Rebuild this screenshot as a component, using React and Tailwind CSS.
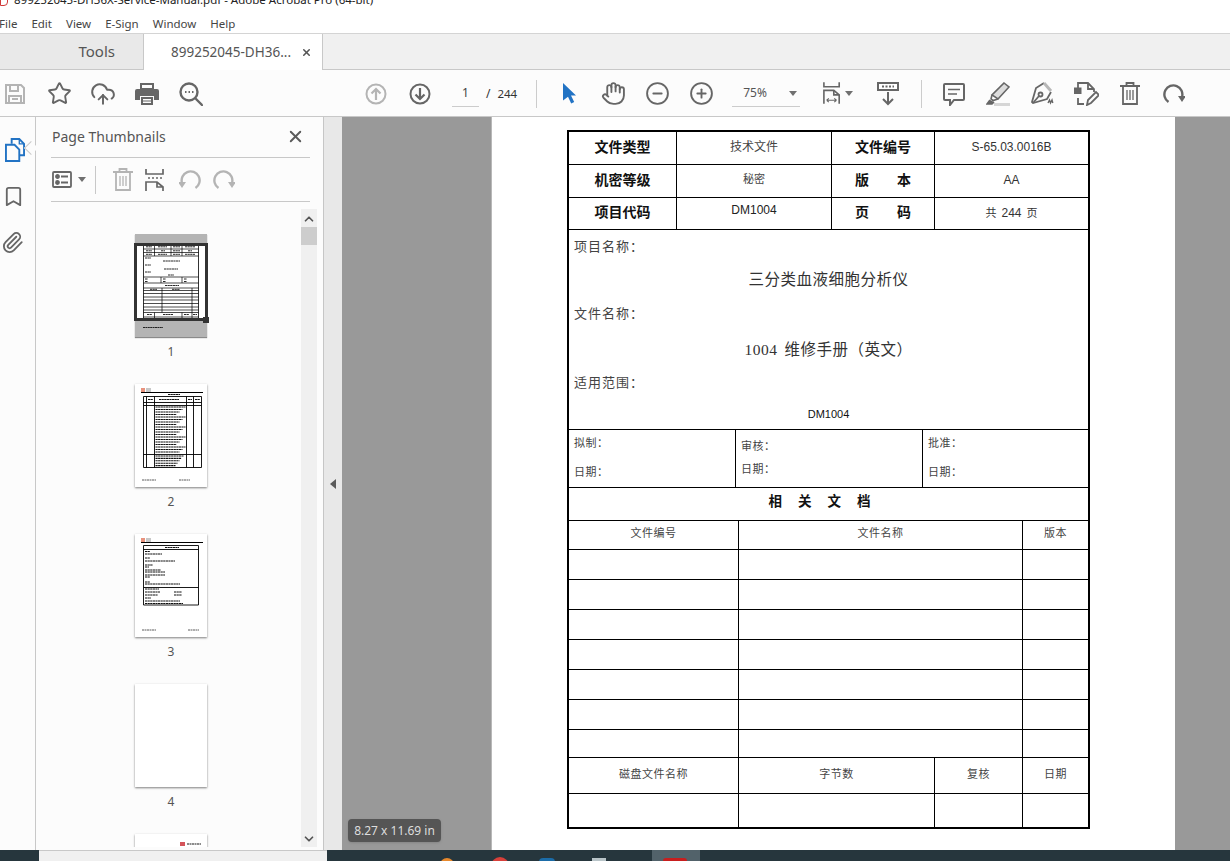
import { Star, CloudUpload, Hand, CircleMinus, CirclePlus, X, ChevronUp, ChevronDown, Bookmark, Paperclip } from "lucide-react";

const UI_FONT = { fontFamily: '"Noto Sans", "Open Sans", sans-serif' };

const ICON = "#666666";
const OFF = "#b4b4b4";

function Slot({ children, className = "" }) {
  return <div className={`w-[44px] h-[44px] flex items-center justify-center shrink-0 ${className}`}>{children}</div>;
}

function Caret({ color = "#707070" }) {
  return (
    <svg width="8" height="5" viewBox="0 0 8 5">
      <path d="M0 0h8L4 5z" fill={color} />
    </svg>
  );
}

function SaveIcon() {
  return (
    <svg width="22" height="22" viewBox="0 0 22 22" fill="none" stroke={OFF} strokeWidth="2">
      <path d="M2 2h15l3 3v15H2z" />
      <path d="M6 2v6h8V2M5 20v-7h12v7M8 16h6" />
    </svg>
  );
}

function PrinterIcon() {
  return (
    <svg width="24" height="22" viewBox="0 0 24 22">
      <path d="M5 0h14v6H5z M7 2v3h10V2z" fill={ICON} fillRule="evenodd" />
      <path d="M2 6h20a2 2 0 0 1 2 2v9h-5v-4H5v4H0V8a2 2 0 0 1 2-2z" fill={ICON} />
      <path d="M6 14h12v8H6z M8 16v1.5h8V16z M8 18.5V20h8v-1.5z" fill={ICON} fillRule="evenodd" />
    </svg>
  );
}

function FindIcon() {
  return (
    <svg width="24" height="24" viewBox="0 0 24 24" fill="none" stroke={ICON} strokeWidth="2.4">
      <circle cx="10" cy="10" r="8.5" />
      <path d="M16.5 16.5l6.5 6.5" strokeLinecap="round" />
      <path d="M6 10h1.5M9.5 10H11M13 10h1.5" strokeWidth="1.8" />
    </svg>
  );
}

function CircleArrow({ up, color }) {
  return (
    <svg width="22" height="22" viewBox="0 0 22 22" fill="none" stroke={color} strokeWidth="2">
      <circle cx="11" cy="11" r="9.5" />
      <path d={up ? "M11 17V6M6.5 10.5L11 6l4.5 4.5" : "M11 5v11M6.5 11.5L11 16l4.5-4.5"} strokeWidth="2.2" />
    </svg>
  );
}

function CursorIcon() {
  return (
    <svg width="14" height="21" viewBox="0 0 14 21">
      <path d="M1 0l13 12.5H9l3.2 6.6-3 1.4L6 13.8 1 17.5z" fill="#2273c4" />
    </svg>
  );
}

function FitIcon() {
  return (
    <svg width="20" height="25" viewBox="0 0 20 25" fill="none" stroke={ICON} strokeWidth="1.8">
      <path d="M1 0v5h17V0" />
      <path d="M1 24V9h11l6 5v10" />
      <path d="M12 9v5h6" />
      <path d="M4 20h11M4 20l2.5-2M4 20l2.5 2M15 20l-2.5-2M15 20l-2.5 2" strokeWidth="1.2" />
    </svg>
  );
}

function ScrollIcon() {
  return (
    <svg width="22" height="24" viewBox="0 0 22 24" fill="none" stroke={ICON} strokeWidth="2">
      <path d="M1 1h20v7H1z" fill="#fff" />
      <path d="M5 4.5h12" strokeDasharray="2 1.5" strokeWidth="2" />
      <path d="M11 10v12M6 17l5 5 5-5" />
    </svg>
  );
}

function CommentIcon() {
  return (
    <svg width="22" height="24" viewBox="0 0 22 24" fill="none" stroke={ICON} strokeWidth="2">
      <path d="M2 2h18a1 1 0 0 1 1 1v14a1 1 0 0 1-1 1H11l-4 5v-5H2a1 1 0 0 1-1-1V3a1 1 0 0 1 1-1z" />
      <path d="M5 7.5h12M5 12h9" strokeWidth="1.6" />
    </svg>
  );
}

function HighlightIcon() {
  return (
    <svg width="24" height="24" viewBox="0 0 24 24" fill="none" stroke={ICON} strokeWidth="1.6">
      <path d="M18 1l5 4-11 12-6-4z" fill="#dcdcdc" />
      <path d="M6 13l-1 4 2 1.5L12 17" />
      <path d="M4 18L1 22h5l2-2" fill={ICON} />
      <path d="M8 21h16v3H8z" fill="#d6d6d6" stroke="none" />
    </svg>
  );
}

function SignIcon() {
  return (
    <svg width="24" height="24" viewBox="0 0 24 24" fill="none" stroke={ICON} strokeWidth="1.8">
      <path d="M14 1l-8 5-4 14 1 1 14-4 4-7" />
      <path d="M14 1l7 8" stroke="#b8b8b8" strokeWidth="3" />
      <path d="M3 21l6-7" />
      <circle cx="10.5" cy="12.5" r="2" />
      <path d="M18 21l1.5-3 1 3 1.5-3 .8 3" strokeWidth="1.4" />
    </svg>
  );
}

function EditDocIcon() {
  return (
    <svg width="25" height="24" viewBox="0 0 25 24" fill="none" stroke={ICON} strokeWidth="1.8">
      <path d="M4 8V1h10l6 6v3" />
      <path d="M14 1v6h6" />
      <path d="M4 16v6h6" />
      <path d="M0 5.5h7.5V12H0z" fill={ICON} stroke="none" />
      <path d="M13 23l1-5 8-8 3 3-8 8z" />
    </svg>
  );
}

function TrashIcon({ color = ICON, w = 20, h = 23 }) {
  return (
    <svg width={w} height={h} viewBox="0 0 20 23" fill="none" stroke={color} strokeWidth="1.8">
      <path d="M0 4h20M6.5 4V1h7v3" />
      <path d="M3 4v18h14V4" />
      <path d="M7 8v10M10 8v10M13 8v10" strokeWidth="1.3" />
    </svg>
  );
}

function RotateIcon({ color = ICON, flip = false }) {
  return (
    <svg width="22" height="22" viewBox="0 0 22 22" className={flip ? "-scale-x-100" : ""} fill="none" stroke={color} strokeWidth="2.4">
      <path d="M5.5 19A9 9 0 1 1 19 14" />
      <path d="M15 13h8l-4 6z" fill={color} stroke="none" />
    </svg>
  );
}

function CopyPagesIcon() {
  return (
    <svg width="20" height="24" viewBox="0 0 21 25" fill="none" stroke="#2273c4" strokeWidth="2">
      <path d="M7 6V1h8l5 5v12h-5" />
      <path d="M15 1v5h5" strokeWidth="1.4" />
      <path d="M1 7h9l5 5v12H1z" fill="#fcfcfc" />
    </svg>
  );
}

function ListViewIcon() {
  return (
    <svg width="20" height="17" viewBox="0 0 20 17" fill="none" stroke={ICON} strokeWidth="1.8">
      <rect x="1" y="1" width="18" height="15" rx="1" />
      <circle cx="5.5" cy="5.5" r="1.5" fill={ICON} />
      <circle cx="5.5" cy="11.5" r="1.5" fill={ICON} />
      <path d="M9 5.5h7M9 11.5h7" />
    </svg>
  );
}

function ThumbTextLines({ rows, weight = 1 }) {
  return rows.map(([x, y, w], i) => <path key={i} d={`M${x} ${y}h${w}`} stroke="#111" strokeWidth={weight} strokeDasharray="2.2 .4" />);
}

function ThumbPageOne() {
  return (
    <div className="relative w-[72px] h-[103px] bg-[#b4b4b4] shadow-[0_1px_1px_rgba(0,0,0,0.45)]">
      <svg width="72" height="103" viewBox="0 0 72 103" className="block">
        <rect x="0" y="9" width="72" height="78" fill="#fff" />
        <path d="M8.5 10v77M63.5 10v77" stroke="#000" strokeWidth=".8" />
        {[10.5, 15, 18.5, 22, 43, 49, 54, 56.5, 59.5, 63, 66, 69.5, 73, 76, 78.5, 83].map((y) => (
          <path key={y} d={`M8.5 ${y}h55`} stroke="#000" strokeWidth=".7" />
        ))}
        <path d="M19.5 10.5v11.5M36 10.5v11.5M47 10.5v11.5M26 43v6M47 43v6M27 54v24.5M57 54v24.5M19.5 78.5v8M47 78.5v8M57 78.5v8" stroke="#000" strokeWidth=".7" />
        <ThumbTextLines weight={.9} rows={[
          [11, 12.8, 6], [23, 12.8, 9], [38, 12.8, 7], [50, 12.8, 10],
          [11, 16.8, 6], [26, 16.8, 4], [38, 16.8, 7], [53, 16.8, 4],
          [11, 20.3, 6], [23, 20.3, 9], [38, 20.3, 7], [50, 20.3, 10],
          [10, 24, 6], [28, 27, 17], [10, 31, 6], [29, 35, 14], [10, 38, 6], [33, 41, 6],
          [10, 45, 3], [28, 45, 3], [49, 45, 3], [10, 47.5, 3], [28, 47.5, 3], [49, 47.5, 3],
          [30, 51.5, 14], [15, 55.3, 7], [37, 55.3, 8], [12, 80.5, 5], [28, 80.5, 10], [49, 80.5, 5], [58, 80.5, 4]
        ]} />
        <path d="M8 93.5h20" stroke="#222" strokeWidth="1" strokeDasharray="2 .4" />
      </svg>
      <div className="absolute left-[-1px] right-[-1px] top-[9px] h-[78px] border-[3px] border-[#333333]" />
      <div className="absolute right-[-2px] top-[83px] w-[6px] h-[6px] bg-[#333333]" />
    </div>
  );
}

function ThumbPageTwo() {
  const text = [];
  for (let i = 0; i < 19; i++) text.push([20.5, 23 + i * 2.5, 30 - (i % 4) * 3]);
  for (let i = 0; i < 5; i++) text.push([20.5, 72 + i * 2.4, 28 - i * 2]);
  return (
    <div className="w-[72px] h-[103px] bg-white shadow-[0_1px_2px_rgba(0,0,0,0.5)]">
      <svg width="72" height="103" viewBox="0 0 72 103" className="block">
        <rect x="6" y="4" width="4" height="4" fill="#e8937e" />
        <rect x="11" y="4" width="5" height="4" fill="#c8c8c8" />
        <path d="M6 8.5h62" stroke="#000" />
        <path d="M8.5 12.5h58v71h-58zM8.5 18.5h58M8.5 21.5h58M8.5 70.5h58M11.5 12.5v71M19.5 12.5v71M51.5 12.5v71M58.5 12.5v71" fill="none" stroke="#000" strokeWidth=".9" />
        <ThumbTextLines weight={1.1} rows={[[33, 10.5, 12], [24, 15.5, 20], [13, 15.5, 5], [53, 15.5, 4], [60, 15.5, 5], ...text]} />
        <path d="M7 96h14M44 96h11" stroke="#333" strokeWidth=".8" strokeDasharray="2 .5" />
      </svg>
    </div>
  );
}

function ThumbPageThree() {
  return (
    <div className="w-[72px] h-[103px] bg-white shadow-[0_1px_2px_rgba(0,0,0,0.5)]">
      <svg width="72" height="103" viewBox="0 0 72 103" className="block">
        <rect x="6" y="4" width="4" height="4" fill="#e8937e" />
        <rect x="11" y="4" width="5" height="4" fill="#c8c8c8" />
        <path d="M6 8.5h62" stroke="#000" />
        <path d="M8.5 11.5h55v59.5h-55zM8.5 15.5h55M8.5 53.5h55" fill="none" stroke="#000" strokeWidth=".9" />
        <ThumbTextLines rows={[[30, 13.5, 14], [10, 17.5, 5], [10, 20, 17], [10, 24, 5], [10, 27, 30], [10, 31, 8], [10, 33, 4], [10, 36, 16], [10, 38, 20], [10, 41, 20], [10, 43, 5], [10, 48, 5], [10, 50, 35], [10, 55, 14], [10, 58, 15], [39, 58, 8], [10, 61, 13], [39, 61, 8], [10, 64, 6], [10, 67, 35], [10, 69.5, 38]]} />
        <path d="M7 96h14M53 96h11" stroke="#333" strokeWidth=".8" strokeDasharray="2 .5" />
      </svg>
    </div>
  );
}

function ThumbPageFive() {
  return (
    <div className="w-[72px] h-[103px] bg-white shadow-[0_1px_2px_rgba(0,0,0,0.5)]">
      <svg width="72" height="103" viewBox="0 0 72 103" className="block">
        <rect x="45" y="8" width="5" height="4" fill="#d4545a" />
        <path d="M52 10h14" stroke="#666" strokeWidth="1.6" strokeDasharray="2 .5" />
      </svg>
    </div>
  );
}

function Thumb({ page, label }) {
  return (
    <div className="flex flex-col items-center shrink-0">
      {page}
      <div className="mt-[8px] mb-[25px] h-[14px] leading-[14px] text-[12px] text-[#555555]">{label}</div>
    </div>
  );
}

function LeftRail() {
  return (
    <div className="relative w-[36px] shrink-0 bg-[#fcfcfc] border-r border-[#c8c8c8] flex flex-col items-start pt-[21px] pl-[5px]">
      <CopyPagesIcon />
      <Bookmark size={23} strokeWidth={1.9} color={ICON} className="mt-[23px] -ml-[3px]" />
      <Paperclip size={23} strokeWidth={1.9} color={ICON} className="mt-[23px] -ml-[4px]" />
      <div className="absolute right-[-1px] top-[26px] w-[10px] h-[10px] rotate-45 bg-[#fcfcfc] border-l border-b border-[#c8c8c8]" />
    </div>
  );
}

function ThumbPanel() {
  return (
    <div className="w-[288px] shrink-0 bg-[#fcfcfc] border-r border-[#c6c6c6] flex flex-col h-full" style={UI_FONT}>
      <div className="ml-[15px] mr-[13px] h-[41px] pb-[2px] shrink-0 border-b border-[#c8c8c8] flex items-center justify-between pl-px pr-[5px]">
        <span className="text-[14px] text-[#555555]">Page Thumbnails</span>
        <X size={19} strokeWidth={2.4} color="#5a5a5a" />
      </div>
      <div className="ml-[15px] mr-[13px] h-[44px] shrink-0 border-b border-[#c8c8c8] flex items-center pl-px">
        <ListViewIcon />
        <div className="ml-[6px]"><Caret /></div>
        <div className="ml-[9px] w-px h-[28px] bg-[#c8c8c8]" />
        <div className="ml-[17px]"><TrashIcon color={OFF} w={20} h={23} /></div>
        <div className="ml-[12px]">
          <svg width="20" height="22" viewBox="0 0 20 22" fill="none" stroke={ICON} strokeWidth="1.7">
            <path d="M1 0v5h17V0M3 9h2M7 9h2M11 9h2M15 9h2" />
            <path d="M1 22V13h11l6 5v4M12 13v5h6" />
          </svg>
        </div>
        <div className="ml-[14px]"><RotateIcon color={OFF} flip /></div>
        <div className="ml-[12px]"><RotateIcon color={OFF} /></div>
      </div>
      <div className="flex h-[638px] overflow-hidden mt-[7px]">
        <div className="w-[265px] pl-[5px] pt-[25px] flex flex-col items-center overflow-hidden">
          <Thumb page={<ThumbPageOne />} label="1" />
          <Thumb page={<ThumbPageTwo />} label="2" />
          <Thumb page={<ThumbPageThree />} label="3" />
          <Thumb page={<div className="w-[72px] h-[103px] bg-white shadow-[0_1px_2px_rgba(0,0,0,0.5)]" />} label="4" />
          <ThumbPageFive />
        </div>
        <div className="w-[16px] h-full bg-[#f0f0f0] flex flex-col items-center">
          <ChevronUp size={14} strokeWidth={3} color="#555555" className="mt-[3px] shrink-0" />
          <div className="w-[16px] h-[18px] mt-px bg-[#cdcdcd] shrink-0" />
          <div className="flex-1" />
          <ChevronDown size={14} strokeWidth={3} color="#555555" className="mb-[1px] shrink-0" />
        </div>
      </div>
    </div>
  );
}

function Cell({ className = "", children }) {
  return <div className={`flex items-center justify-center border-black ${className}`}>{children}</div>;
}

function HeadRow({ height, cells }) {
  return (
    <div className={`flex border-b border-black ${height}`}>
      <Cell className="w-[108px] border-r pb-[2px] font-bold text-[14px] text-[#111111]">{cells[0]}</Cell>
      <Cell className="w-[155px] border-r pb-[2px] text-[12px] text-[#444444]">{cells[1]}</Cell>
      <Cell className="w-[103px] border-r pb-[2px] font-bold text-[14px] text-[#111111]">{cells[2]}</Cell>
      <Cell className="flex-1 pb-[2px] text-[12px] text-[#333333]">{cells[3]}</Cell>
    </div>
  );
}

function LabelLine({ height, children }) {
  return <div className={`${height} flex items-center pl-[5px] text-[13px] text-[#444444] tracking-[1px]`}>{children}</div>;
}

function CenterLine({ height, className, children }) {
  return <div className={`${height} flex items-center justify-center ${className}`}>{children}</div>;
}

function RelatedRow({ height, a, b, c }) {
  return (
    <div className={`flex border-b border-black ${height} text-[11px] text-[#444444] tracking-[0.5px]`}>
      <Cell className="w-[170px] border-r pb-[3px]">{a}</Cell>
      <Cell className="w-[284px] border-r pb-[3px]">{b}</Cell>
      <Cell className="flex-1 pb-[3px]">{c}</Cell>
    </div>
  );
}

function DiskRow({ height, cells, last }) {
  return (
    <div className={`flex ${last ? "" : "border-b"} border-black ${height} text-[11px] text-[#444444] tracking-[0.5px]`}>
      <Cell className="w-[170px] border-r pb-[3px]">{cells[0]}</Cell>
      <Cell className="w-[196px] border-r pb-[3px]">{cells[1]}</Cell>
      <Cell className="w-[88px] border-r pb-[3px]">{cells[2]}</Cell>
      <Cell className="flex-1 pb-[3px]">{cells[3]}</Cell>
    </div>
  );
}

function FormTable() {
  const font = { fontFamily: '"Liberation Sans", "Noto Sans CJK SC", sans-serif' };
  return (
    <div className="w-[523px] h-[699px] border-2 border-black bg-white" style={font}>
      <HeadRow height="h-[33px]" cells={["文件类型", "技术文件", "文件编号", "S-65.03.0016B"]} />
      <HeadRow height="h-[33px]" cells={["机密等级", <span className="text-[11px] -mt-[1px]">秘密</span>, "版　　本", "AA"]} />
      <HeadRow height="h-[32px]" cells={["项目代码", <span className="text-[12px] text-[#222222] -mt-[5px]">DM1004</span>, "页　　码", <span className="text-[11px]">共 <span className="text-[12px] mx-[2px]">244</span> 页</span>]} />
      <div className="h-[200px] border-b border-black flex flex-col">
        <LabelLine height="h-[34px]">项目名称：</LabelLine>
        <CenterLine height="h-[32px]" className="text-[15.5px] text-[#333333] tracking-[0.5px]">三分类血液细胞分析仪</CenterLine>
        <LabelLine height="h-[37px]">文件名称：</LabelLine>
        <CenterLine height="h-[35px]" className="text-[15.5px] text-[#333333] tracking-[0.5px]">
          <span style={{ fontFamily: '"Liberation Serif", "Noto Sans CJK SC", serif' }}>1004</span>
          <span className="ml-[7px]">维修手册（英文）</span>
        </CenterLine>
        <LabelLine height="h-[32px]">适用范围：</LabelLine>
        <CenterLine height="h-[30px]" className="text-[11px] text-[#111111]">DM1004</CenterLine>
      </div>
      <div className="h-[58px] flex border-b border-black text-[11px] text-[#444444] tracking-[0.5px]">
        <div className="w-[167px] border-r border-black pl-[5px] pt-[5px] flex flex-col gap-[13px]">
          <div className="leading-[16px]">拟制：</div>
          <div className="leading-[16px]">日期：</div>
        </div>
        <div className="w-[187px] border-r border-black pl-[5px] pt-[8px] flex flex-col gap-[7px]">
          <div className="leading-[16px]">审核：</div>
          <div className="leading-[16px]">日期：</div>
        </div>
        <div className="flex-1 pl-[5px] pt-[5px] flex flex-col gap-[13px]">
          <div className="leading-[16px]">批准：</div>
          <div className="leading-[16px]">日期：</div>
        </div>
      </div>
      <div className="h-[33px] pb-[3px] pr-[18px] border-b border-black flex items-center justify-center gap-[16px] font-bold text-[13.5px] text-[#111111]">
        <span>相</span>
        <span>关</span>
        <span>文</span>
        <span>档</span>
      </div>
      <RelatedRow height="h-[29px]" a="文件编号" b="文件名称" c="版本" />
      <RelatedRow height="h-[30px]" />
      <RelatedRow height="h-[30px]" />
      <RelatedRow height="h-[30px]" />
      <RelatedRow height="h-[30px]" />
      <RelatedRow height="h-[30px]" />
      <RelatedRow height="h-[30px]" />
      <RelatedRow height="h-[28px]" />
      <DiskRow height="h-[36px]" cells={["磁盘文件名称", "字节数", "复核", "日期"]} />
      <DiskRow height="h-[33px]" cells={["", "", "", ""]} last />
    </div>
  );
}

export default function App() {
  return (
    <div className="w-[1230px] h-[861px] overflow-hidden bg-white flex flex-col" style={UI_FONT}>
      {/* title bar, cut off at the top of the shot */}
      <div className="h-[14px] shrink-0 overflow-hidden flex items-end pb-[4px] bg-white">
        <div className="flex items-center h-[16px] -mb-[1px]">
          <div className="w-[8px] h-[13px] border border-[#d03a3a] bg-white rounded-br-sm -mt-[8px]" />
          <span className="ml-[6px] text-[11.5px] text-[#222222] whitespace-nowrap -translate-y-[3px]">899252045-DH36X-Service-Manual.pdf - Adobe Acrobat Pro (64-bit)</span>
        </div>
      </div>

      {/* menu bar */}
      <div className="h-[19px] shrink-0 flex items-center gap-[14px] -ml-px text-[11.5px] text-[#444444] bg-white">
        <span>File</span>
        <span>Edit</span>
        <span>View</span>
        <span>E-Sign</span>
        <span>Window</span>
        <span>Help</span>
      </div>

      {/* tabs */}
      <div className="h-[37px] shrink-0 flex bg-[#f0f0f0] border-t border-[#d4d4d4]">
        <div className="w-[143px] h-[36px] bg-[#e9e9e9] border-b border-[#c8c8c8] flex items-center justify-end pr-[28px] text-[15px] text-[#555555]">Tools</div>
        <div className="w-[180px] h-[36px] bg-white border-l border-r border-[#c8c8c8] flex items-center pl-[27px] text-[13.5px] text-[#555555]">
          <span>899252045-DH36...</span>
          <X size={11} strokeWidth={3.4} color="#555555" className="ml-[10px]" />
        </div>
        <div className="flex-1 border-b border-[#c8c8c8]" />
      </div>

      {/* main toolbar */}
      <div className="h-[47px] shrink-0 bg-[#fcfcfc] border-b border-[#c8c8c8] flex items-center pt-px">
        <div className="flex -ml-[7px]">
          <Slot><SaveIcon /></Slot>
          <Slot><Star size={25} strokeWidth={1.8} color={ICON} /></Slot>
          <Slot><CloudUpload size={26} strokeWidth={1.8} color={ICON} /></Slot>
          <Slot><PrinterIcon /></Slot>
          <Slot><FindIcon /></Slot>
        </div>
        <div className="flex ml-[141px]">
          <Slot><CircleArrow up color={OFF} /></Slot>
          <Slot><CircleArrow color={ICON} /></Slot>
        </div>
        <div className="ml-[10px] w-[27px] h-[27px] border-b border-[#cccccc] flex items-center justify-center text-[12px] text-[#444444]">1</div>
        <span className="ml-[7px] text-[12px] text-[#333333]">/</span>
        <span className="ml-[7px] text-[11.5px] text-[#333333]">244</span>
        <div className="ml-[19px] w-px h-[28px] bg-[#cccccc]" />
        <div className="flex ml-[10px]">
          <Slot><CursorIcon /></Slot>
          <Slot><Hand size={25} strokeWidth={1.8} color={ICON} /></Slot>
          <Slot><CircleMinus size={25} strokeWidth={1.8} color={ICON} /></Slot>
          <Slot><CirclePlus size={25} strokeWidth={1.8} color={ICON} /></Slot>
        </div>
        <div className="ml-[9px] w-[68px] h-[27px] border-b border-[#cccccc] flex items-center pl-[11px] text-[12px] text-[#555555]">
          <span>75%</span>
          <div className="ml-[22px]"><Caret /></div>
        </div>
        <div className="ml-[23px] flex items-center w-[30px]">
          <FitIcon />
          <div className="ml-[4px]"><Caret /></div>
        </div>
        <div className="flex ml-[13px]">
          <Slot><ScrollIcon /></Slot>
        </div>
        <div className="ml-[11px] w-px h-[28px] bg-[#cccccc]" />
        <div className="flex ml-[10px]">
          <Slot><CommentIcon /></Slot>
          <Slot><HighlightIcon /></Slot>
          <Slot><SignIcon /></Slot>
          <Slot><EditDocIcon /></Slot>
          <Slot><TrashIcon /></Slot>
          <Slot><RotateIcon /></Slot>
        </div>
      </div>

      {/* work area */}
      <div className="h-[733px] shrink-0 flex">
        <LeftRail />
        <ThumbPanel />
        <div className="w-[18px] shrink-0 bg-[#e8e8e8] flex items-center justify-center">
          <svg width="6" height="10" viewBox="0 0 6 10">
            <path d="M6 0v10L0 5z" fill="#5a5a5a" />
          </svg>
        </div>
        <div className="relative flex-1 bg-[#999999] overflow-hidden">
          <div className="ml-[149px] w-[684px] h-full bg-white border-l border-[#b8b8b8] pl-[75px] pt-[13px]">
            <FormTable />
          </div>
          <div className="absolute left-[6px] top-[702px] w-[93px] h-[23px] rounded-[4px] bg-[#555555] shadow-sm flex items-center justify-center text-[12px] text-[#dddddd]">8.27 x 11.69 in</div>
        </div>
      </div>

      {/* windows taskbar, mostly cut off */}
      <div className="h-[11px] shrink-0 flex bg-[#26363d] overflow-hidden">
        <div className="w-[39px] shrink-0" />
        <div className="w-[288px] shrink-0 bg-[#f0f0f0] border-t border-[#c8c8c8]" />
        <div className="relative flex-1">
          <div className="absolute left-[113px] top-[8px] w-[14px] h-[10px] rounded-t-full bg-[#e8892c]" />
          <div className="absolute left-[164px] top-[7px] w-[18px] h-[10px] rounded-t-full bg-[#d8403a]" />
          <div className="absolute left-[212px] top-[8px] w-[16px] h-[8px] rounded-t-[4px] bg-[#1b6ca8]" />
          <div className="absolute left-[265px] top-[8px] w-[14px] h-[8px] bg-[#b8c4c8]" />
          <div className="absolute left-[325px] top-0 w-[48px] h-[11px] bg-[#52626a]" />
          <div className="absolute left-[336px] top-[8px] w-[24px] h-[8px] rounded-t-[3px] bg-[#c81e1e]" />
        </div>
      </div>
    </div>
  );
}
